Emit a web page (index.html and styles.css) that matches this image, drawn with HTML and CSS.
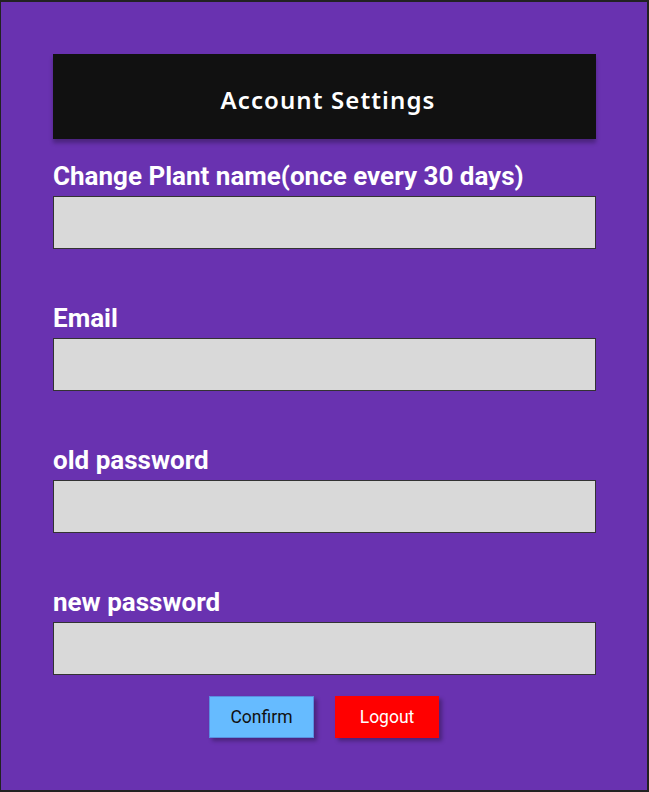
FILE: index.html
```html
<!DOCTYPE html>
<html lang="en">
<head>
<meta charset="utf-8">
<title>Account Settings</title>
<link rel="stylesheet" href="styles.css">
</head>
<body>
<div class="frame">
  <div class="content">
    <header class="title-bar"><h1 class="title">Account Settings</h1></header>
    <div class="field">
      <label class="label" for="plant">Change Plant name(once every 30 days)</label>
      <input class="input" id="plant" type="text">
    </div>
    <div class="field">
      <label class="label" for="email">Email</label>
      <input class="input" id="email" type="text">
    </div>
    <div class="field">
      <label class="label" for="oldpw">old password</label>
      <input class="input" id="oldpw" type="password">
    </div>
    <div class="field">
      <label class="label" for="newpw">new password</label>
      <input class="input" id="newpw" type="password">
    </div>
    <div class="actions">
      <button class="btn btn-confirm" type="button">Confirm</button>
      <button class="btn btn-logout" type="button">Logout</button>
    </div>
  </div>
</div>
</body>
</html>
```
FILE: styles.css
```css
* { box-sizing: border-box; }
html, body { margin: 0; padding: 0; background: #222; }
body { width: 649px; height: 792px; overflow: hidden; font-family: Roboto, "Liberation Sans", sans-serif; }
.frame {
  width: 649px;
  height: 792px;
  background: #6932b0;
  border-top: 2px solid #222;
  border-left: 1px solid #222;
  border-right: 2px solid #222;
  border-bottom: 2px solid #222;
}
.content {
  padding: 52px 51px 0 52px;
  display: flex;
  flex-direction: column;
}
.title-bar {
  height: 85px;
  background: #111111;
  box-shadow: 0 4px 4px rgba(0,0,0,0.28);
  display: flex;
  align-items: center;
  justify-content: center;
  padding-top: 6px;
  padding-left: 7px;
  margin-bottom: 22px;
}
.title {
  margin: 0;
  color: #fff;
  font-family: "Comic Sans MS", "Noto Sans", sans-serif;
  font-weight: 600;
  font-size: 24px;
  letter-spacing: 1.1px;
  line-height: 28px;
}
.field {
  display: flex;
  flex-direction: column;
  margin-bottom: 54px;
}
.field:nth-of-type(4) { margin-bottom: 21px; }
.label {
  color: #fff;
  font-weight: 700;
  font-size: 26px;
  line-height: 30px;
  margin-bottom: 5px;
  white-space: nowrap;
}
.input {
  display: block;
  width: 100%;
  height: 53px;
  margin: 0;
  background: #d9d9d9;
  border: 1px solid #333;
  border-radius: 0;
  padding: 0 8px;
  font: 16px Roboto, sans-serif;
}
.actions {
  display: flex;
  justify-content: center;
  gap: 21px;
  padding-right: 1px;
}
.btn {
  width: 105px;
  height: 42px;
  border-radius: 0;
  font-family: Roboto, sans-serif;
  font-size: 17.5px;
  padding: 0;
  box-shadow: 3px 3px 4px rgba(0,0,0,0.3);
  cursor: pointer;
}
.btn-confirm {
  background: #66bbff;
  color: #111;
  border: 1px solid #5a8ee0;
}
.btn-logout {
  width: 104px;
  background: #ff0000;
  color: #fff;
  border: 1px solid #ff0000;
}
```
